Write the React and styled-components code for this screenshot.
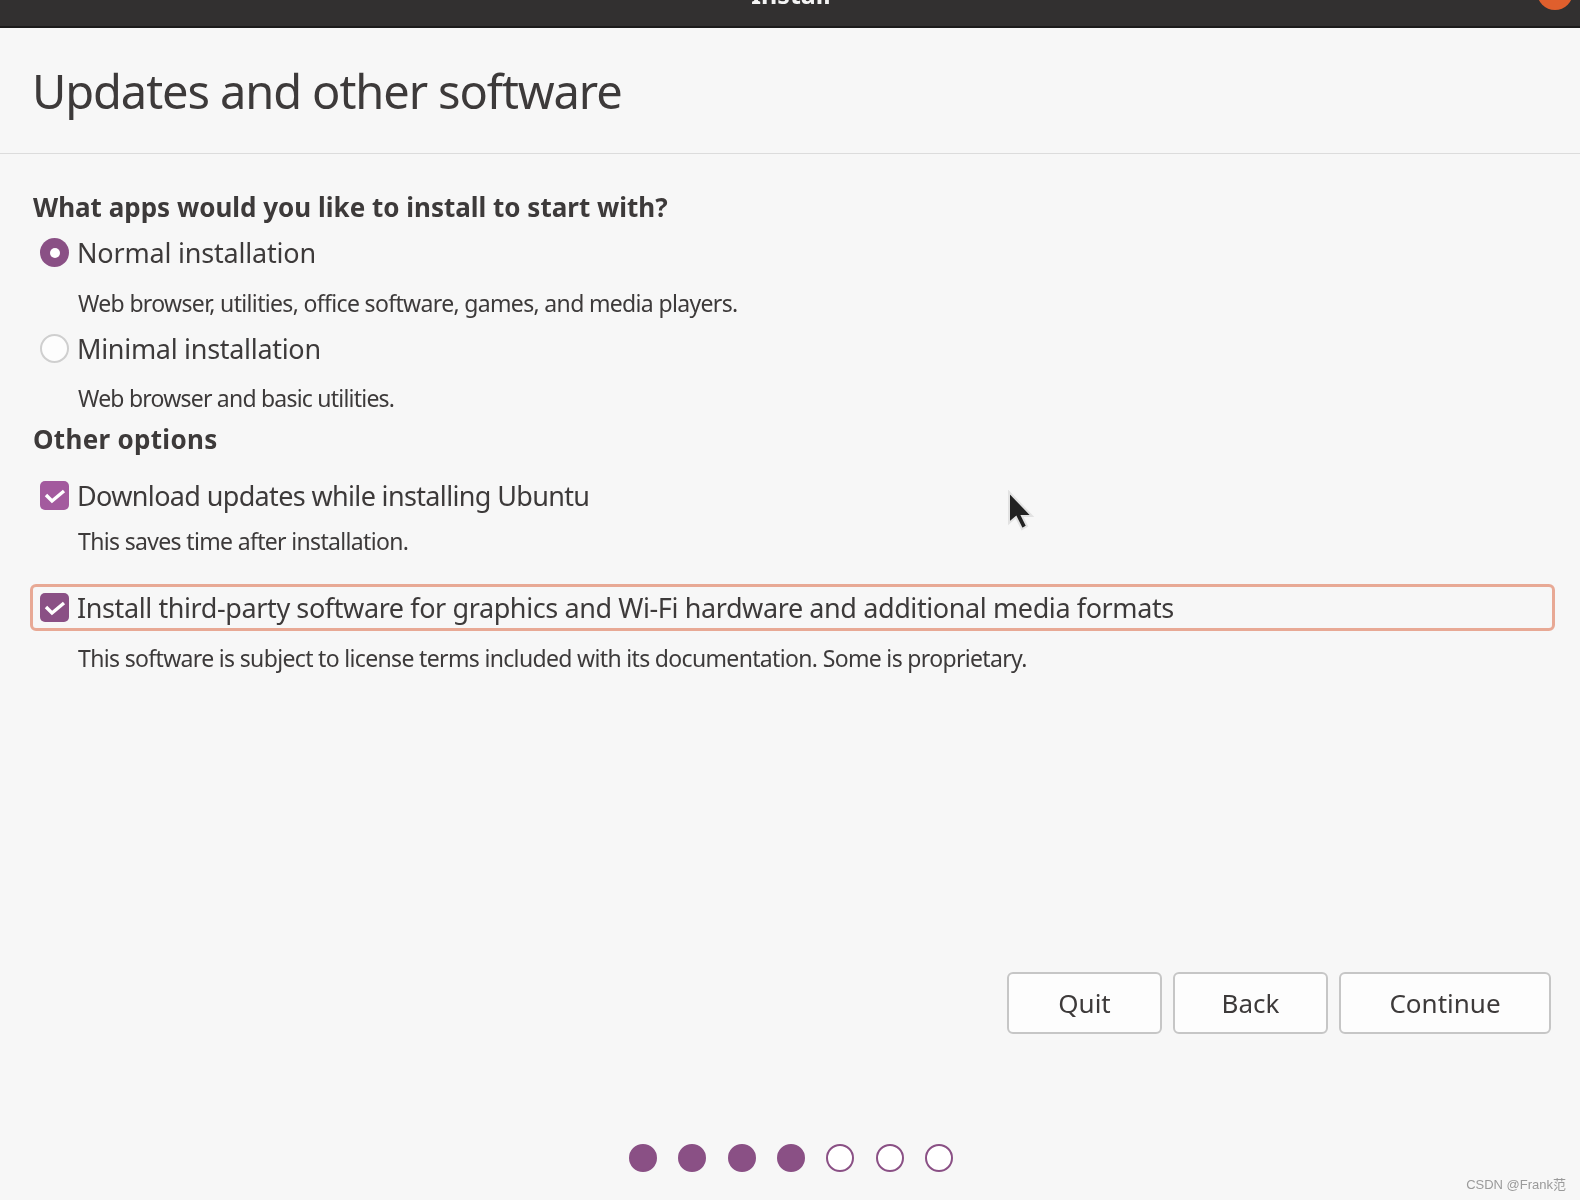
import React from 'react'
import styled, { createGlobalStyle } from 'styled-components';

const GlobalStyle = createGlobalStyle`
  html, body {
    margin: 0;
    padding: 0;
    background: #f7f7f7;
  }
`;

const Page = styled.div`
  position: relative;
  width: 1580px;
  height: 1200px;
  overflow: hidden;
  background: #f7f7f7;
  color: #3d3a3a;
  font-family: "Noto Sans", "Open Sans", sans-serif;
  filter: blur(0.4px);
`;

const TitleBar = styled.header`
  position: relative;
  display: flex;
  justify-content: center;
  height: 26px;
  overflow: hidden;
  background: #323030;
  border-bottom: 2px solid #1c1b1b;
`;

const WindowTitle = styled.h1`
  margin: -21px 0 0 2px;
  font-size: 25px;
  line-height: 30px;
  font-weight: 700;
  color: #f4f4f4;
`;

const CloseButton = styled.div`
  position: absolute;
  top: -26px;
  right: 7px;
  display: flex;
  align-items: flex-end;
  justify-content: center;
  width: 36px;
  height: 36px;
  border-radius: 50%;
  background: #df5f2d;
`;

const PageHeader = styled.div`
  display: flex;
  align-items: center;
  height: 126px;
  padding-left: 32px;
  box-sizing: border-box;
  border-bottom: 1px solid #dcdcdc;
`;

const PageTitle = styled.h2`
  margin: 0;
  font-size: 47px;
  font-weight: 400;
  letter-spacing: -1.1px;
  color: #3d3a3a;
`;

const Content = styled.main`
  display: flex;
  flex-direction: column;
  align-items: flex-start;
  padding: 38px 25px 0 33px;
`;

const SectionTitle = styled.h3`
  margin: ${(p) => p.$top || 0}px 0 0;
  font-size: 26px;
  line-height: 30px;
  font-weight: 700;
  letter-spacing: ${(p) => p.$spacing || 0}px;
`;

const Option = styled.label`
  display: flex;
  align-items: center;
  gap: 8px;
  margin: ${(p) => p.$top}px 0 0 7px;
  font-size: 27px;
  line-height: 29px;
  letter-spacing: ${(p) => p.$spacing || -0.4}px;
`;

const FocusOption = styled(Option)`
  align-self: stretch;
  height: 47px;
  box-sizing: border-box;
  margin-left: -3px;
  padding-left: 7px;
  border: 3px solid #e8a995;
  border-radius: 6px;
`;

const Radio = styled.span`
  display: flex;
  align-items: center;
  justify-content: center;
  width: 29px;
  height: 29px;
  box-sizing: border-box;
  border-radius: 50%;
  background: ${(p) => (p.$checked ? '#8a5085' : '#fdfdfd')};
  border: ${(p) => (p.$checked ? 'none' : '2px solid #cfcfcf')};

  &::after {
    content: "";
    display: ${(p) => (p.$checked ? 'block' : 'none')};
    width: 10px;
    height: 10px;
    border-radius: 50%;
    background: #fff;
  }
`;

const Check = styled.span`
  display: flex;
  align-items: center;
  justify-content: center;
  width: 29px;
  height: 29px;
  border-radius: 5px;
  background: ${(p) => (p.$dark ? '#8a5085' : '#a35a9e')};
`;

const Description = styled.p`
  margin: ${(p) => p.$top}px 0 0 45px;
  font-size: 23px;
  line-height: 30px;
  letter-spacing: ${(p) => p.$spacing || -0.66}px;
`;

const Actions = styled.div`
  display: flex;
  justify-content: flex-end;
  gap: 11px;
  align-self: stretch;
  margin-top: 299px;
  padding-right: 4px;
`;

const ActionButton = styled.button`
  width: ${(p) => p.$width}px;
  height: 62px;
  padding: 0;
  box-sizing: border-box;
  background: #fdfdfd;
  border: 2px solid #c6c6c6;
  border-radius: 6px;
  color: #3d3a3a;
  font-family: inherit;
  font-size: 26px;
`;

const Steps = styled.div`
  display: flex;
  justify-content: center;
  gap: 21.3px;
  align-self: stretch;
  margin: 110px 0 0 -33px;
  padding-left: 27px;
`;

const Step = styled.span`
  width: 28px;
  height: 28px;
  box-sizing: border-box;
  border-radius: 50%;
  border: 2px solid #8a5085;
  background: ${(p) => (p.$done ? '#8a5085' : '#fff')};
`;

const Watermark = styled.span`
  position: absolute;
  right: 14px;
  bottom: 6px;
  font-family: "Liberation Sans", "Noto Sans CJK SC", sans-serif;
  font-size: 13px;
  line-height: 18px;
  color: #9a9a9a;
`;

const Cursor = styled.svg`
  position: absolute;
  left: 1006px;
  top: 490px;
`;

function CheckMark() {
  return (
    <svg width="22" height="16" viewBox="0 0 22 16">
      <path d="M2 7 L8 13 L20 3" fill="none" stroke="#fff" strokeWidth="3.4" />
    </svg>
  );
}

function App() {
  return (
    <Page>
      <GlobalStyle />
      <TitleBar>
        <WindowTitle>Install</WindowTitle>
        <CloseButton>
          <svg width="14" height="14" viewBox="0 0 14 14">
            <path d="M1 -6 L7 2 L13 -6" fill="none" stroke="#f6e4dc" strokeWidth="2" />
          </svg>
        </CloseButton>
      </TitleBar>
      <PageHeader>
        <PageTitle>Updates and other software</PageTitle>
      </PageHeader>
      <Content>
        <SectionTitle>What apps would you like to install to start with?</SectionTitle>
        <Option $top={16} $spacing={-0.2}><Radio $checked />Normal installation</Option>
        <Description $top={21}>Web browser, utilities, office software, games, and media players.</Description>
        <Option $top={16} $spacing={-0.3}><Radio />Minimal installation</Option>
        <Description $top={20} $spacing={-0.78}>Web browser and basic utilities.</Description>
        <SectionTitle $top={11} $spacing={0.3}>Other options</SectionTitle>
        <Option $top={27} $spacing={-0.65}><Check><CheckMark /></Check>Download updates while installing Ubuntu</Option>
        <Description $top={16}>This saves time after installation.</Description>
        <FocusOption $top={28}><Check $dark><CheckMark /></Check>Install third-party software for graphics and Wi-Fi hardware and additional media formats</FocusOption>
        <Description $top={12}>This software is subject to license terms included with its documentation. Some is proprietary.</Description>
        <Actions>
          <ActionButton $width={155}>Quit</ActionButton>
          <ActionButton $width={155}>Back</ActionButton>
          <ActionButton $width={212}>Continue</ActionButton>
        </Actions>
        <Steps>
          {[1, 2, 3, 4, 5, 6, 7].map((n) => <Step key={n} $done={n <= 4} />)}
        </Steps>
      </Content>
      <Cursor width="30" height="44" viewBox="0 0 30 44">
        <path d="M3 2 L3 33 L10 27 L16 39 L21 36 L16 26 L26 26 Z" fill="#222" stroke="#e2e2e2" strokeWidth="2" />
      </Cursor>
      <Watermark>CSDN @Frank范</Watermark>
    </Page>
  );
}
export default App;
